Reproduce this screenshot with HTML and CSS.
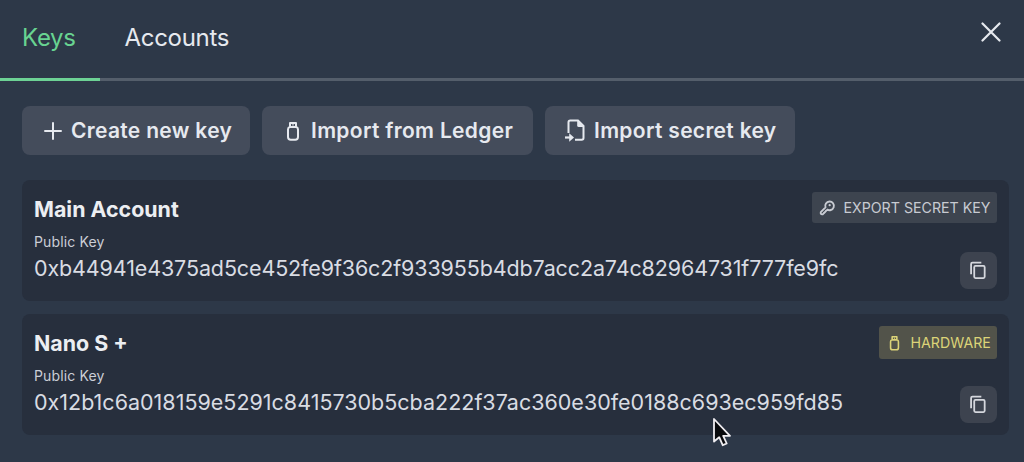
FILE: index.html
```html
<!DOCTYPE html>
<html lang="en">
<head>
<meta charset="utf-8">
<title>Keys</title>
<link rel="stylesheet" href="styles.css">
</head>
<body>
<svg class="sprite" aria-hidden="true">
  <symbol id="usb" viewBox="0 0 14 20"><path d="M4 6V2h6v4M3.700 6h6.600Q12 6.400 12 8.500V16q0 2.700-2.700 2.700H4.700Q2 18.700 2 16V8.500Q2 6.400 3.700 6Z" fill="none" stroke="currentColor" stroke-width="2" stroke-linejoin="round"/><path d="M6.300 3.200h1.400v1.400H6.300z" fill="currentColor"/></symbol>
  <symbol id="copy" viewBox="0 0 20 20"><path d="M2.200 14V3.200q0-1.400 1.400-1.400H13M6.800 5.200h8.400q1.300 0 1.300 1.300v10.200q0 1.300-1.300 1.300H6.800q-1.300 0-1.300-1.300V6.500q0-1.300 1.300-1.300Z" fill="none" stroke="currentColor" stroke-width="1.900"/></symbol>
</svg>
<header class="header">
  <nav class="tabs">
    <a class="tab tab-active"><span class="tab-text">Keys</span></a>
    <a class="tab"><span class="tab-text">Accounts</span></a>
  </nav>
  <svg class="close" viewBox="0 0 20 20"><path d="M1.500 1.500 18.500 18.500M18.500 1.500 1.500 18.500" fill="none" stroke="currentColor" stroke-width="2.200" stroke-linecap="round"/></svg>
</header>
<main class="main">
  <div class="actions">
    <button class="action create"><svg class="plus" viewBox="0 0 18 18"><path d="M9 1v16M1 9h16" stroke="currentColor" stroke-width="2" stroke-linecap="round"/></svg><span>Create new key</span></button>
    <button class="action ledger"><svg class="usb"><use href="#usb"/></svg><span>Import from Ledger</span></button>
    <button class="action secret"><svg class="file" viewBox="0 0 22 23"><path d="M4.500 14V3.200q0-1.700 1.700-1.700H14l5.500 5.500v12q0 1.800-1.800 1.800H11" fill="none" stroke="currentColor" stroke-width="2"/><path d="M13.200 1.500 19.800 8h-5q-1.600 0-1.600-1.600z" fill="currentColor"/><path d="M1 18.500h5" stroke="currentColor" stroke-width="2.200"/><path d="M5.200 14.300 10 18.500 5.200 22.700Z" fill="currentColor"/></svg><span>Import secret key</span></button>
  </div>
  <section class="card">
    <div class="card-head"><h2 class="name">Main Account</h2><span class="badge"><svg class="key" viewBox="0 0 18 18"><path d="M8.300 10.800A4.600 4.600 0 1 0 6.900 8.900L1.900 13.900Q1.300 16.700 3.900 16.200L8.300 11.700" fill="none" stroke="currentColor" stroke-width="2" stroke-linejoin="round"/><path d="M4.800 14.600 6.700 14.200M7 12.300 9 11.800" stroke="currentColor" stroke-width="1.500"/><circle cx="11.300" cy="6.500" r="1.200" fill="currentColor"/></svg><span>EXPORT SECRET KEY</span></span></div>
    <div class="label">Public Key</div>
    <div class="row"><div class="hash hash-main">0xb44941e4375ad5ce452fe9f36c2f933955b4db7acc2a74c82964731f777fe9fc</div><button class="copy"><svg class="copy-icon"><use href="#copy"/></svg></button></div>
  </section>
  <section class="card">
    <div class="card-head"><h2 class="name">Nano S +</h2><span class="badge hardware"><svg class="usb-small"><use href="#usb"/></svg><span>HARDWARE</span></span></div>
    <div class="label">Public Key</div>
    <div class="row"><div class="hash hash-nano">0x12b1c6a018159e5291c8415730b5cba222f37ac360e30fe0188c693ec959fd85</div><button class="copy"><svg class="copy-icon"><use href="#copy"/></svg></button></div>
  </section>
</main>
<svg class="cursor" viewBox="0 0 20 30"><path d="M2 2V24.500L7.200 20.200 10.700 28.200 14.700 26.500 11.200 18.800H18Z" fill="#08090c" stroke="#f0eef2" stroke-width="1.800" stroke-linejoin="round"/></svg>
</body>
</html>
```

FILE: styles.css
```css
* { box-sizing: border-box; }
body { margin: 0; height: 462px; overflow: hidden; background: #2d3848; color: #e6e9ef; font-family: Inter, sans-serif; }
.sprite { display: none; }
.header { height: 81px; display: flex; justify-content: space-between; box-shadow: inset 0 -3px #545e6b; }
.tabs { display: flex; }
.tab { height: 81px; padding: 22px 22px 0; font-size: 24px; line-height: 31px; letter-spacing: -0.300px; white-space: nowrap; }
.tab:last-child { padding-left: 24.500px; }
.tab-active { width: 100px; color: #68d391; border-bottom: 3px solid #6dd295; }
.close { width: 20px; height: 20px; margin: 22px 23px 0 0; }
.main { padding: 25px 15px 0 22px; }
.actions { display: flex; gap: 12.500px; }
.action { height: 49px; margin-bottom: 1px; display: flex; align-items: center; border: 0; border-radius: 8px; background: #444c5b; color: #e6e9ef; font: 600 21px/30px Inter, sans-serif; letter-spacing: 0.320px; white-space: nowrap; padding: 0; }
.create { width: 227.500px; padding-left: 22px; gap: 9px; }
.ledger { width: 270.500px; padding-left: 24px; gap: 11px; }
.secret { width: 250px; padding-left: 19px; gap: 8px; }
.plus { width: 18px; height: 18px; }
.usb { width: 14px; height: 20px; }
.file { width: 22px; height: 23px; }
.card { height: 121px; margin-top: 13px; padding: 12px 12px 0; border-radius: 8px; background: #272f3d; }
.actions + .card { margin-top: 24px; }
.card-head { display: flex; height: 37px; justify-content: space-between; align-items: flex-start; }
.name { margin: 2px 0 0; font-size: 21.400px; line-height: 30px; font-weight: 700; color: #eceef2; }
.badge { display: flex; align-items: center; width: 185px; height: 31px; padding-left: 7px; gap: 7.500px; border-radius: 3px; background: #3d444f; color: #c8cbd2; font-size: 14.200px; line-height: 20px; white-space: nowrap; }
.hardware { width: 118px; height: 33px; padding-left: 10px; gap: 10.500px; background: #52534a; color: #dcd478; }
.key { width: 17px; height: 17px; }
.usb-small { width: 11px; height: 16px; }
.label { height: 23px; padding-top: 3px; font-size: 14px; line-height: 20px; letter-spacing: 0.150px; color: #cbced6; }
.row { display: flex; height: 37px; justify-content: space-between; }
.hash { font-size: 21.500px; line-height: 33px; color: #d9dce3; white-space: nowrap; }
.hash-main { letter-spacing: -0.125px; }
.copy { width: 37px; height: 37px; padding: 0; border: 0; border-radius: 8px; display: grid; place-items: center; background: #3d434f; color: #d5d7dd; }
.copy-icon { width: 19px; height: 19px; display: block; }
.cursor { position: absolute; left: 711.500px; top: 417px; width: 20px; height: 30px; }
```
